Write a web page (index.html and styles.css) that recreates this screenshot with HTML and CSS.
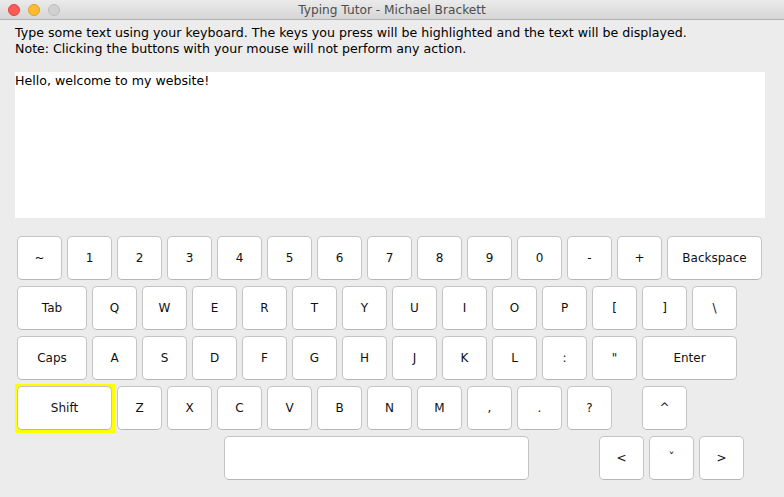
FILE: index.html
```html
<!DOCTYPE html>
<html>
<head>
<meta charset="utf-8">
<title>Typing Tutor - Michael Brackett</title>
<link rel="stylesheet" href="styles.css">
</head>
<body>
<div class="window">
  <div class="titlebar">
    <div class="lights">
      <span class="light red"></span>
      <span class="light yellow"></span>
      <span class="light gray"></span>
    </div>
    <div class="title">Typing Tutor - Michael Brackett</div>
  </div>
  <div class="content">
    <div class="instructions">
      <div>Type some text using your keyboard. The keys you press will be highlighted and the text will be displayed.</div>
      <div>Note: Clicking the buttons with your mouse will not perform any action.</div>
    </div>
    <div class="textarea">Hello, welcome to my website!</div>
    <div class="keyboard">
      <div class="row">
        <span class="key">~</span><span class="key">1</span><span class="key">2</span><span class="key">3</span><span class="key">4</span><span class="key">5</span><span class="key">6</span><span class="key">7</span><span class="key">8</span><span class="key">9</span><span class="key">0</span><span class="key">-</span><span class="key">+</span><span class="key wide">Backspace</span>
      </div>
      <div class="row">
        <span class="key mid">Tab</span><span class="key">Q</span><span class="key">W</span><span class="key">E</span><span class="key">R</span><span class="key">T</span><span class="key">Y</span><span class="key">U</span><span class="key">I</span><span class="key">O</span><span class="key">P</span><span class="key">[</span><span class="key">]</span><span class="key">\</span>
      </div>
      <div class="row">
        <span class="key mid">Caps</span><span class="key">A</span><span class="key">S</span><span class="key">D</span><span class="key">F</span><span class="key">G</span><span class="key">H</span><span class="key">J</span><span class="key">K</span><span class="key">L</span><span class="key">:</span><span class="key">"</span><span class="key wide">Enter</span>
      </div>
      <div class="row">
        <span class="hl"><span class="key wide">Shift</span></span><span class="key">Z</span><span class="key">X</span><span class="key">C</span><span class="key">V</span><span class="key">B</span><span class="key">N</span><span class="key">M</span><span class="key">,</span><span class="key">.</span><span class="key">?</span><span class="key up">^</span>
      </div>
      <div class="row">
        <span class="key space"></span><span class="key arrow-left">&lt;</span><span class="key">ˇ</span><span class="key">&gt;</span>
      </div>
    </div>
  </div>
</div>
</body>
</html>
```

FILE: styles.css
```css
html, body {
  margin: 0;
  padding: 0;
  background: #ececec;
}

.window {
  width: 784px;
  height: 497px;
  display: flex;
  flex-direction: column;
  background: #ececec;
  font-family: "DejaVu Sans", "Liberation Sans", sans-serif;
  color: #000;
  overflow: hidden;
}

.titlebar {
  height: 19px;
  border-bottom: 1px solid #b1b1b1;
  background: linear-gradient(#ebebeb, #d5d5d5);
  display: flex;
  align-items: center;
  position: relative;
}

.lights {
  display: flex;
  gap: 8px;
  padding-left: 8px;
}

.light {
  width: 12px;
  height: 12px;
  border-radius: 50%;
  box-sizing: border-box;
}

.red { background: #fc5b57; border: 1px solid #e0443e; }
.yellow { background: #fdbc2f; border: 1px solid #dea123; }
.gray { background: #d0d0d0; border: 1px solid #bdbdbd; }

.title {
  position: absolute;
  left: 0;
  right: 0;
  top: 0;
  bottom: 0;
  display: flex;
  align-items: center;
  justify-content: center;
  font-size: 12.2px;
  color: #4d4d4d;
}

.content {
  padding: 5px 15px 0 15px;
  display: flex;
  flex-direction: column;
}

.instructions {
  font-size: 12.6px;
  line-height: 16px;
  color: #000;
  margin-bottom: 15px;
}

.textarea {
  width: 750px;
  height: 146px;
  background: #ffffff;
  font-size: 12.6px;
  line-height: 16px;
  padding-top: 1px;
  box-sizing: border-box;
  color: #000;
}

.keyboard {
  margin-top: 18px;
  margin-left: 2px;
  display: flex;
  flex-direction: column;
  gap: 6px;
}

.row {
  display: flex;
  gap: 5px;
}

.key {
  width: 45px;
  height: 44px;
  box-sizing: border-box;
  background: #ffffff;
  border: 1px solid #c4c4c4;
  border-bottom-color: #b6b6b6;
  border-radius: 5px;
  display: flex;
  align-items: center;
  justify-content: center;
  font-size: 12px;
  color: #111;
}

.mid { width: 70px; }
.wide { width: 95px; }

.hl {
  display: flex;
  background: #ffff00;
  padding: 2px 3px 3px 2px;
  margin: -2px -3px -3px -2px;
}

.up { margin-left: 25px; }

.space {
  width: 305px;
  margin-left: 207px;
}

.arrow-left { margin-left: 65px; }
```
